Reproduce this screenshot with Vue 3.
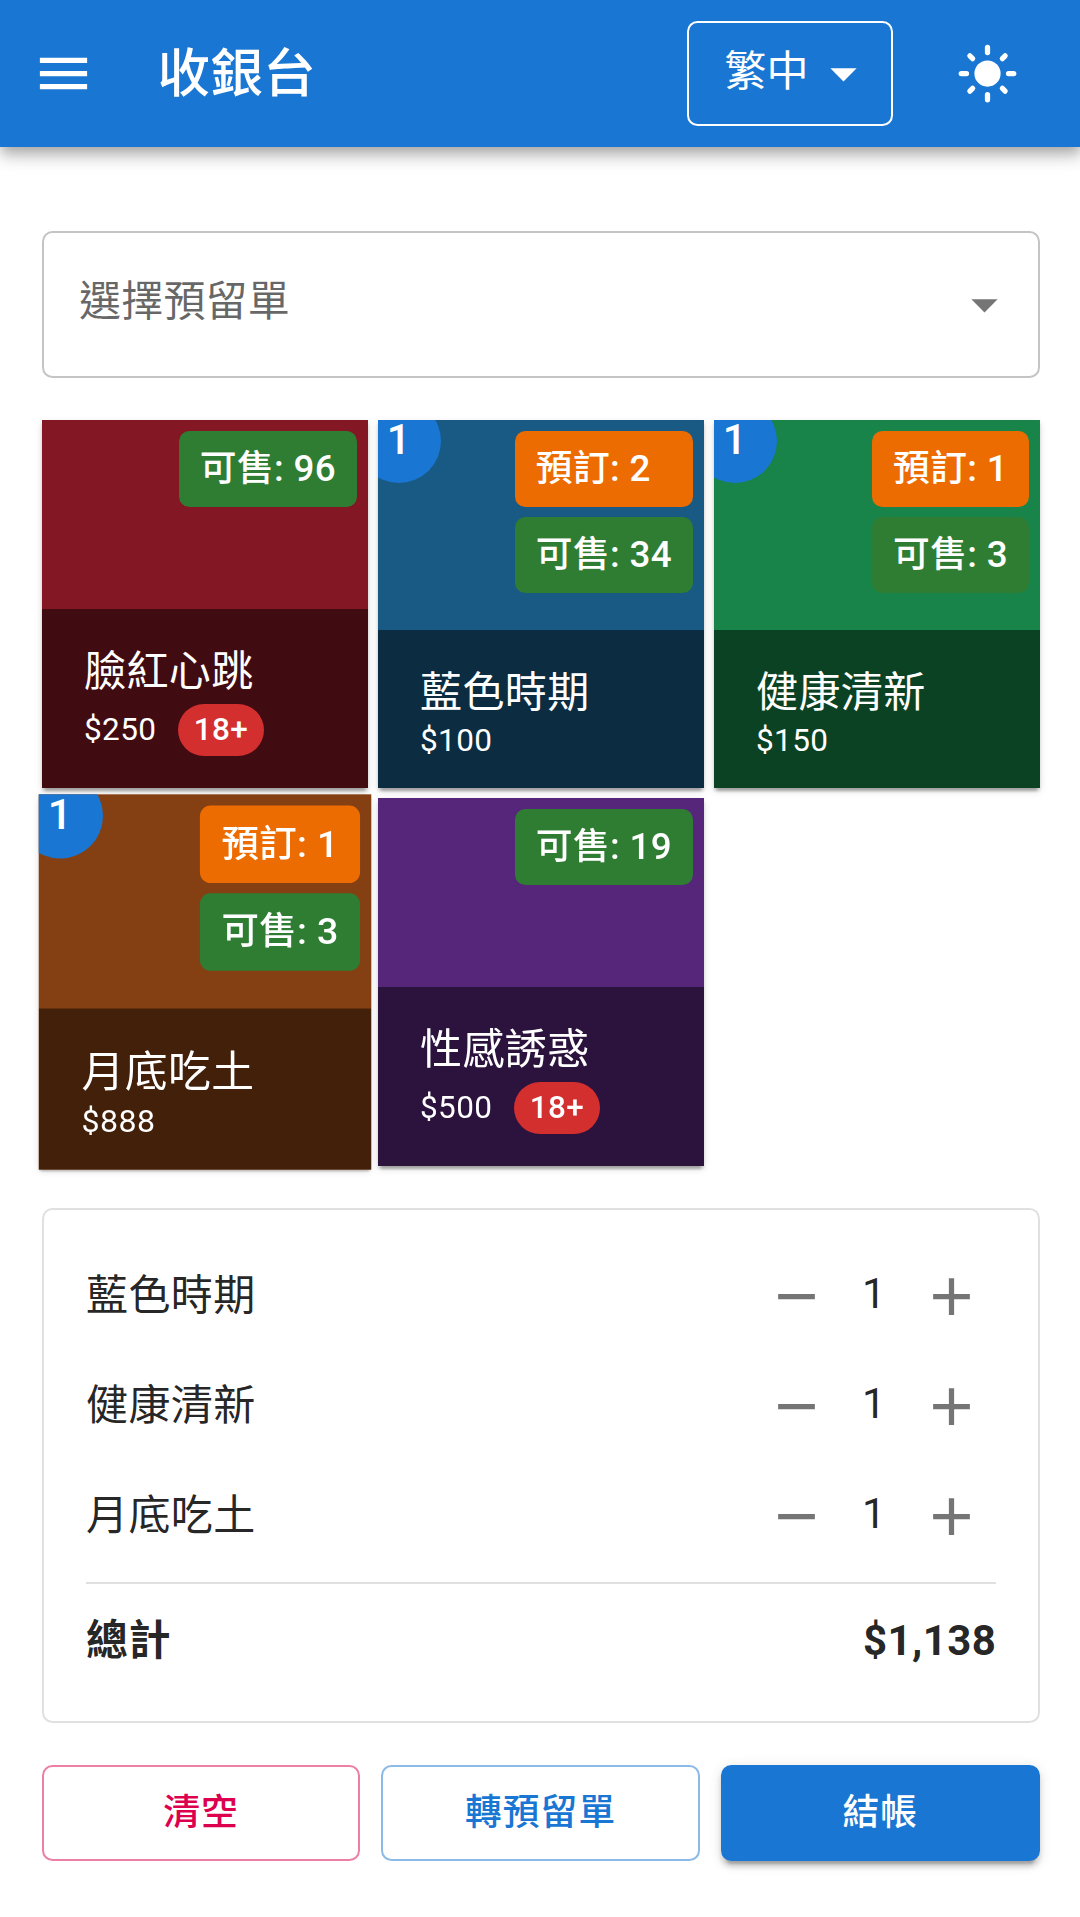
<template>
  <div class="cashier">
    <header class="app-bar">
      <button class="menu-btn" aria-label="menu">
        <svg class="icon" viewBox="0 0 24 24">
          <path d="M3 18h18v-2H3v2zm0-5h18v-2H3v2zm0-7v2h18V6H3z" />
        </svg>
      </button>
      <h1 class="title">收銀台</h1>
      <div class="lang-select">
        <span>繁中</span>
        <svg class="icon" viewBox="0 0 24 24"><path d="M7 10l5 5 5-5z" /></svg>
      </div>
      <button class="theme-btn" aria-label="theme">
        <svg class="icon" viewBox="0 0 24 24">
          <circle cx="12" cy="12" r="5" />
          <path
            class="rays"
            d="M2 12h2M20 12h2M12 2v2M12 20v2M5.28 5.28l1.06 1.06M17.66 17.66l1.06 1.06M18.72 5.28l-1.06 1.06M6.34 17.66l-1.06 1.06"
          />
        </svg>
      </button>
    </header>

    <main class="content">
      <div class="reserve-select">
        <span>選擇預留單</span>
        <svg class="icon" viewBox="0 0 24 24"><path d="M7 10l5 5 5-5z" /></svg>
      </div>

      <div class="products">
        <div
          v-for="item in products"
          :key="item.name"
          class="card"
          :class="[item.theme, { active: item.active }]"
        >
          <span v-if="item.count" class="count">{{ item.count }}</span>
          <div class="tags">
            <span v-if="item.reserved" class="tag reserved">預訂: {{ item.reserved }}</span>
            <span class="tag available">可售: {{ item.available }}</span>
          </div>
          <div class="bar">
            <div class="name">{{ item.name }}</div>
            <div class="price">
              <span>${{ item.price }}</span>
              <span v-if="item.adult" class="adult">18+</span>
            </div>
          </div>
        </div>
      </div>

      <section class="cart">
        <div v-for="item in cart" :key="item.name" class="row">
          <span class="row-name">{{ item.name }}</span>
          <button class="step" aria-label="minus">
            <svg class="icon" viewBox="0 0 24 24"><path d="M19 13H5v-2h14v2z" /></svg>
          </button>
          <span class="amount">{{ item.count }}</span>
          <button class="step" aria-label="plus">
            <svg class="icon" viewBox="0 0 24 24">
              <path d="M19 13h-6v6h-2v-6H5v-2h6V5h2v6h6v2z" />
            </svg>
          </button>
        </div>
        <div class="total">
          <span>總計</span>
          <span>${{ total.toLocaleString('en-US') }}</span>
        </div>
      </section>

      <div class="actions">
        <button class="btn clear">清空</button>
        <button class="btn reserve">轉預留單</button>
        <button class="btn checkout">結帳</button>
      </div>
    </main>
  </div>
</template>

<script setup>
  import { ref, computed } from 'vue'

  const products = ref([
    { name: '臉紅心跳', price: 250, available: 96, theme: 'red', adult: true },
    { name: '藍色時期', price: 100, available: 34, reserved: 2, count: 1, theme: 'blue' },
    { name: '健康清新', price: 150, available: 3, reserved: 1, count: 1, theme: 'green' },
    {
      name: '月底吃土',
      price: 888,
      available: 3,
      reserved: 1,
      count: 1,
      theme: 'brown',
      active: true
    },
    { name: '性感誘惑', price: 500, available: 19, theme: 'purple', adult: true }
  ])

  const cart = computed(() => products.value.filter((item) => item.count))

  const total = computed(() => {
    return cart.value.reduce((acc, cur) => acc + cur.price * cur.count, 0)
  })
</script>

<style>
  body {
    margin: 0;
    background: #fff;
    overflow: hidden;
  }
</style>

<style scoped>
  .cashier {
    width: 1081.5px;
    height: 1917px;
    box-sizing: border-box;
    font-family: Roboto, 'Noto Sans CJK TC', sans-serif;
    font-size: 42px;
    line-height: 63px;
    letter-spacing: 0.00938em;
    color: rgba(0, 0, 0, 0.87);
  }

  button {
    margin: 0;
    padding: 0;
    border: 0;
    background: none;
    color: inherit;
    font: inherit;
    letter-spacing: inherit;
  }

  .icon {
    display: block;
    width: 63px;
    height: 63px;
    flex: none;
    fill: currentColor;
  }

  .app-bar {
    position: relative;
    display: flex;
    align-items: center;
    height: 147px;
    padding: 0 42px 0 10.5px;
    box-sizing: border-box;
    background: #1976d2;
    color: #fff;
    box-shadow:
      0 5.25px 10.5px -2.625px rgba(0, 0, 0, 0.2),
      0 10.5px 13.125px rgba(0, 0, 0, 0.14),
      0 2.625px 26.25px rgba(0, 0, 0, 0.12);
  }

  .menu-btn {
    padding: 21px;
    margin-right: 42px;
  }

  .title {
    flex: 1;
    margin: 0;
    font-size: 52.5px;
    font-weight: 500;
    line-height: 84px;
    letter-spacing: 0.0075em;
  }

  .lang-select {
    display: flex;
    align-items: center;
    justify-content: space-between;
    width: 206px;
    height: 105px;
    padding: 0 16px 0 36px;
    box-sizing: border-box;
    border: 2px solid #fff;
    border-radius: 10.5px;
  }

  .lang-select span {
    padding-bottom: 5px;
    letter-spacing: 0;
  }

  .theme-btn {
    padding: 21px;
    margin: 0 0 0 42px;
  }

  .rays {
    fill: none;
    stroke: currentColor;
    stroke-width: 2;
    stroke-linecap: round;
  }

  .content {
    padding: 84px 42px 0;
  }

  .reserve-select {
    display: flex;
    align-items: center;
    justify-content: space-between;
    height: 147px;
    padding: 0 22px 0 35px;
    box-sizing: border-box;
    border: 2px solid rgba(0, 0, 0, 0.23);
    border-radius: 10.5px;
    color: rgba(0, 0, 0, 0.6);
  }

  .reserve-select span {
    padding-bottom: 6px;
    letter-spacing: 0.2px;
  }

  .reserve-select .icon {
    color: rgba(0, 0, 0, 0.54);
  }

  .products {
    display: grid;
    grid-template-columns: repeat(3, 1fr);
    grid-auto-rows: 367.5px;
    gap: 10.5px;
    margin-top: 42px;
  }

  .card {
    position: relative;
    display: flex;
    flex-direction: column;
    justify-content: space-between;
    overflow: hidden;
    color: #fff;
    box-shadow:
      0 5.25px 2.625px -2.625px rgba(0, 0, 0, 0.2),
      0 2.625px 2.625px rgba(0, 0, 0, 0.14),
      0 2.625px 7.875px rgba(0, 0, 0, 0.12);
  }

  .card.active {
    transform: scale(1.02);
  }

  .red {
    background: #831724;
  }

  .blue {
    background: #185a83;
  }

  .green {
    background: #188449;
  }

  .brown {
    background: #844013;
  }

  .purple {
    background: #56267b;
  }

  .count {
    position: absolute;
    top: -21px;
    left: -21px;
    width: 84px;
    height: 84px;
    box-sizing: border-box;
    border-radius: 50%;
    background: #1976d2;
    font-weight: 500;
    line-height: 82px;
    text-align: center;
  }

  .tags {
    display: flex;
    flex-direction: column;
    gap: 10px;
    align-self: flex-end;
    margin: 11px 10.5px 0 0;
  }

  .tag {
    padding: 0 21px;
    border-radius: 10.5px;
    font-size: 36.75px;
    font-weight: 500;
    line-height: 76px;
    letter-spacing: 0.00938em;
  }

  .reserved {
    background: #ed6c02;
  }

  .available {
    background: #2e7d32;
  }

  .bar {
    padding: 31.5px 42px;
    background: rgba(0, 0, 0, 0.5);
  }

  .name {
    height: 63px;
    line-height: 61px;
  }

  .price {
    display: flex;
    align-items: center;
    gap: 21.5px;
    font-size: 31.5px;
    line-height: 31.5px;
  }

  .adult {
    padding: 0 15.75px;
    border-radius: 26.25px;
    background: #d32f2f;
    font-weight: 500;
    line-height: 52.5px;
  }

  .cart {
    display: flex;
    flex-direction: column;
    gap: 21px;
    height: 515px;
    margin-top: 42px;
    padding: 42px 41.3px 42px 42px;
    box-sizing: border-box;
    border: 2px solid rgba(0, 0, 0, 0.12);
    border-radius: 10.5px;
  }

  .row {
    display: flex;
    align-items: center;
    height: 89.25px;
  }

  .row-name {
    flex: 1;
    padding-bottom: 2px;
  }

  .step {
    padding: 13.125px;
    color: rgba(0, 0, 0, 0.54);
  }

  .amount {
    width: 66px;
    padding-bottom: 6px;
    text-align: center;
  }

  .total {
    display: flex;
    justify-content: space-between;
    padding-top: 25px;
    border-top: 2px solid rgba(0, 0, 0, 0.12);
    font-weight: 700;
  }

  .actions {
    display: grid;
    grid-template-columns: 318.2px 1fr 318.5px;
    gap: 21px;
    margin-top: 42px;
  }

  .btn {
    height: 96px;
    box-sizing: border-box;
    border-radius: 10.5px;
    font-size: 36.75px;
    font-weight: 500;
    letter-spacing: 0.02857em;
  }

  .clear {
    border: 2px solid rgba(220, 0, 78, 0.5);
    color: #dc004e;
  }

  .reserve {
    border: 2px solid rgba(25, 118, 210, 0.5);
    color: #1976d2;
  }

  .checkout {
    background: #1976d2;
    color: #fff;
    box-shadow:
      0 7.875px 2.625px -5.25px rgba(0, 0, 0, 0.2),
      0 5.25px 5.25px rgba(0, 0, 0, 0.14),
      0 2.625px 13.125px rgba(0, 0, 0, 0.12);
  }
</style>
